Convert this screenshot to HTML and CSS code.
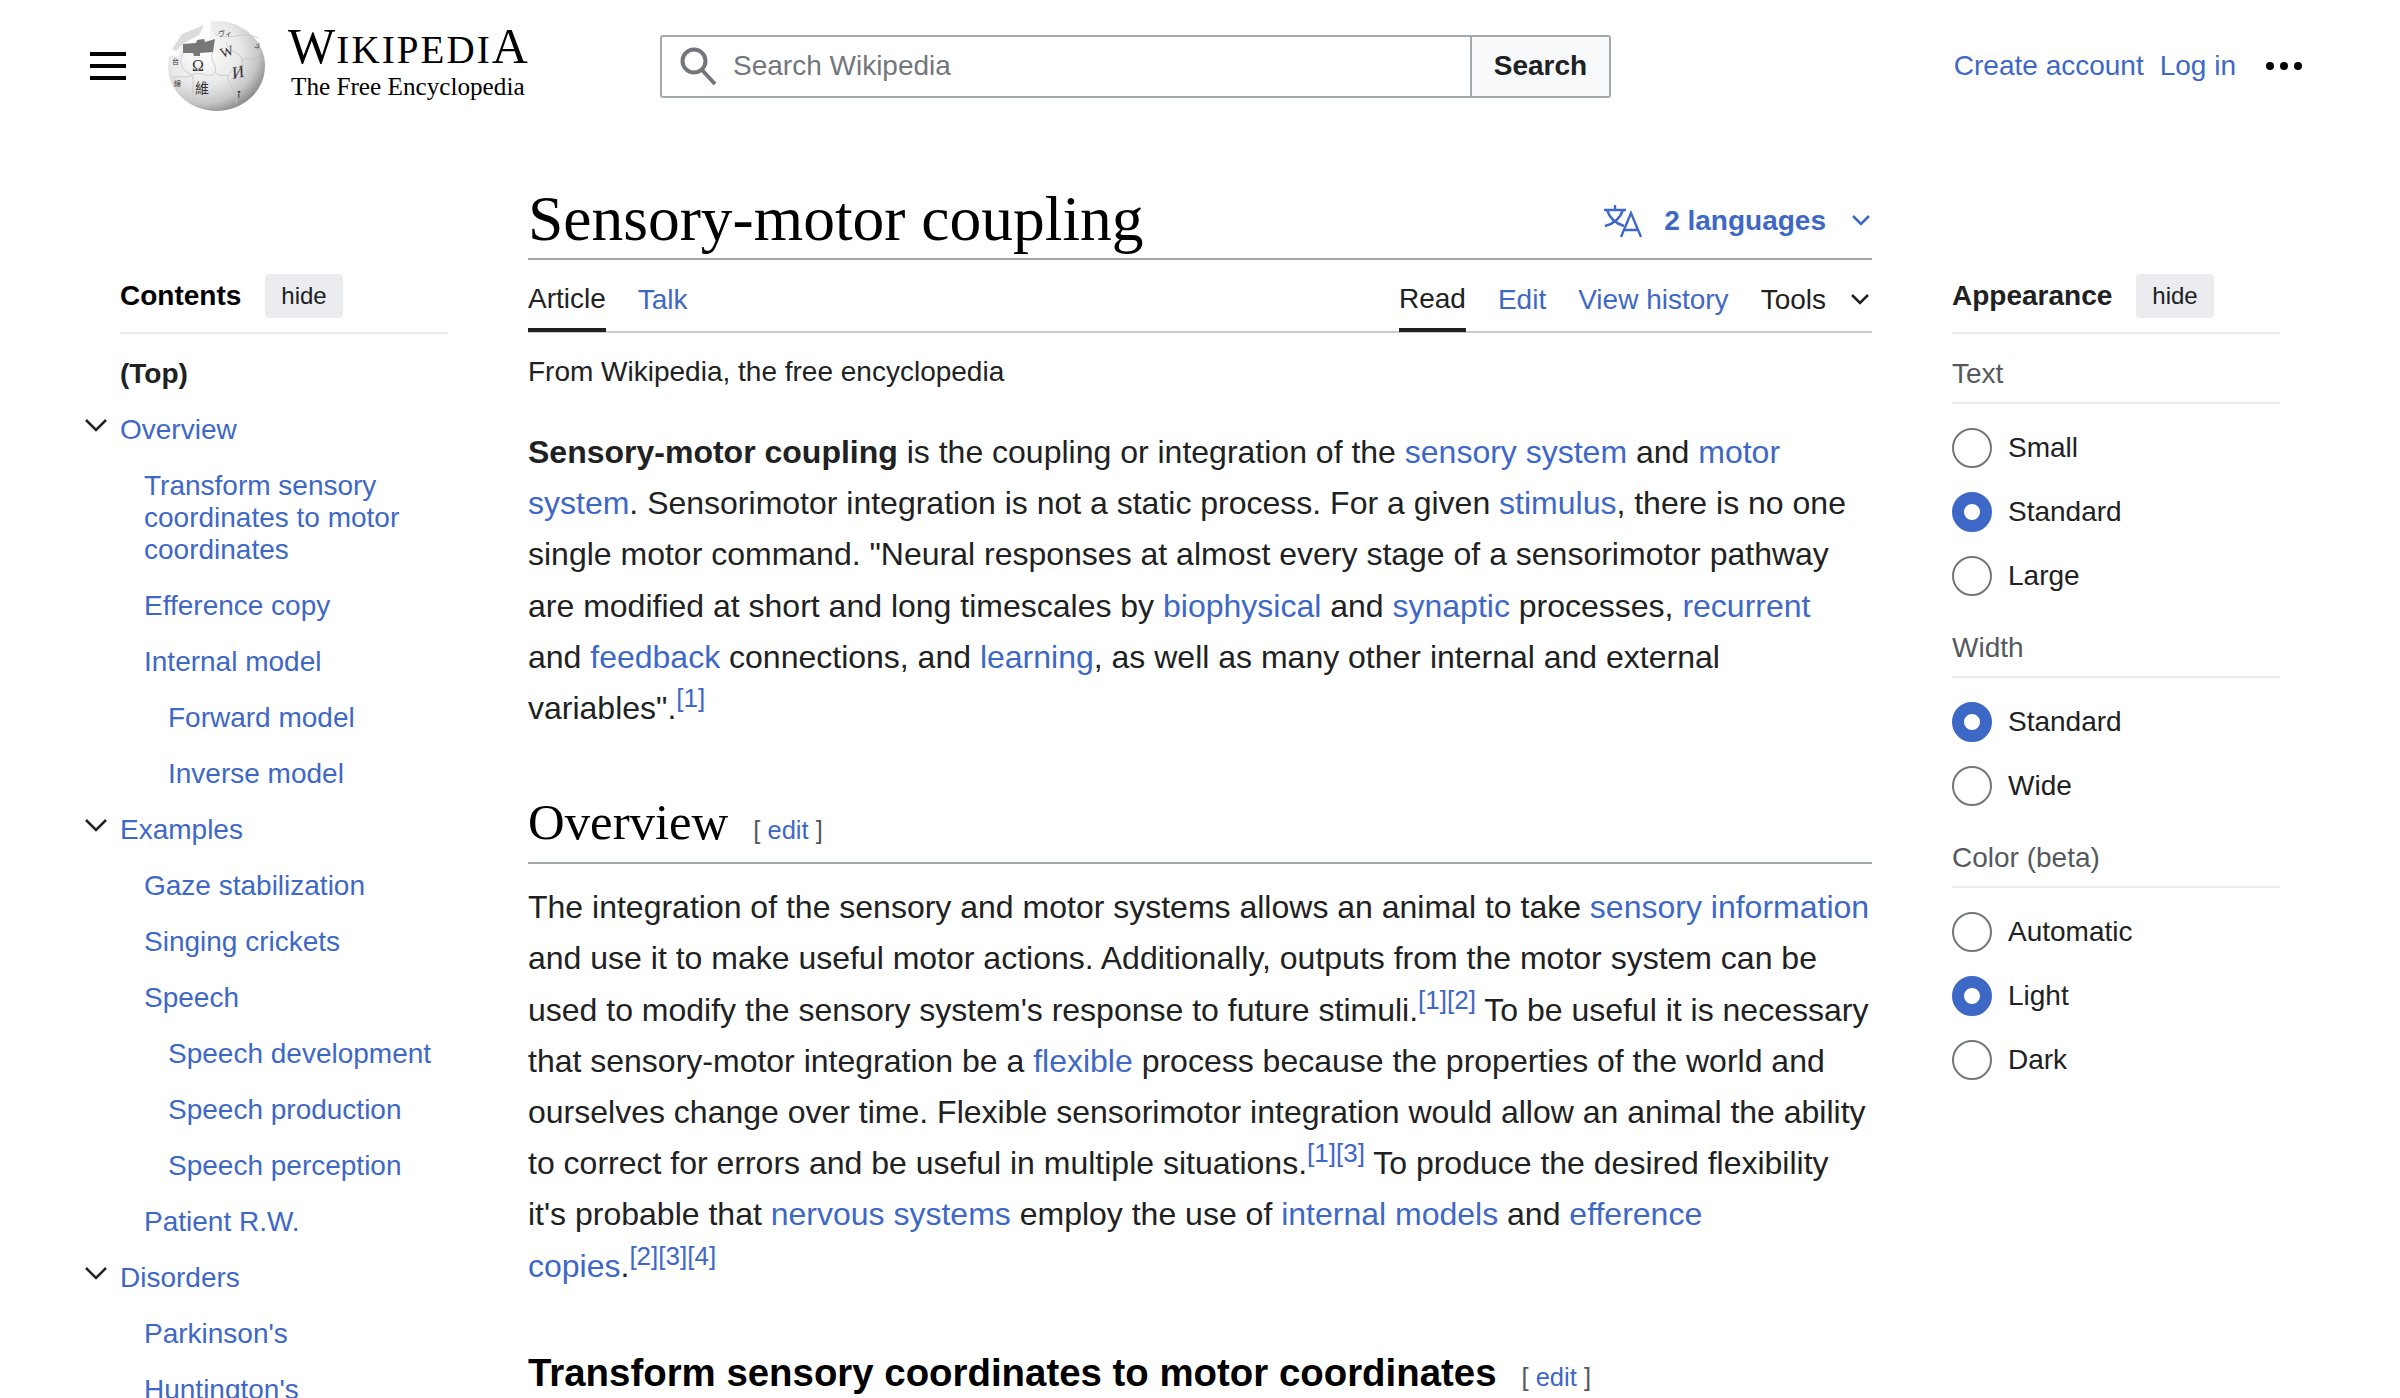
FILE: index.html
```html
<!DOCTYPE html>
<html>
    <head>
        <title>Sensory-motor coupling - Wikipedia</title>
        <link rel="stylesheet" href="styles.css">
    </head>
    <body>
        <header class="top">
            <div class="menu"><span></span><span></span><span></span></div>
            <div class="logo">
                <svg class="globe" width="100" height="92" viewBox="0 0 100 92">
                    <defs>
                        <radialGradient id="ball" cx="36%" cy="34%" r="70%">
                            <stop offset="0" stop-color="#fff"/>
                            <stop offset="0.55" stop-color="#e8e8e8"/>
                            <stop offset="0.82" stop-color="#c6c6c6"/>
                            <stop offset="1" stop-color="#8e8e8e"/>
                        </radialGradient>
                    </defs>
                    <ellipse cx="48.5" cy="46" rx="48.5" ry="45" fill="url(#ball)"/>
                    <path d="M0 0H43L42 19 15 23 10 36H0Z" fill="#fff"/>
                    <path d="M36 5 31 15 16 23 8 31 4 29 14 14Z" fill="#dcdcdc"/>
                    <path d="M15 24 28 23 29 20 36 19 37 22 47 19 45 32 32 33 32 36 26 36 25 33 15 33Z" fill="#777"/>
                    <g fill="none" stroke="#c4c4c4" stroke-width="0.8">
                        <path d="M45 32C40 40 50 44 47 52 44 60 32 50 24 55 16 60 12 54 4 58"/>
                        <path d="M58 22C60 34 72 30 74 40 76 50 62 48 60 56 58 64 70 68 68 84"/>
                        <path d="M47 52C52 58 56 54 60 56"/>
                        <path d="M24 55C28 66 20 72 30 86"/>
                        <path d="M47 14C60 22 74 10 90 18"/>
                        <path d="M74 40C80 36 88 44 97 38"/>
                        <path d="M15 33C10 44 14 50 24 55"/>
                    </g>
                    <text class="g1" x="24" y="51">Ω</text>
                    <text class="g2" x="54" y="38" transform="rotate(-18 54 38)">W</text>
                    <text class="g3" x="65" y="59" transform="rotate(-12 65 59)">И</text>
                    <text class="g4" x="27" y="73">維</text>
                    <text class="g5 bold" x="69" y="78">ז</text>
                    <text class="g6" x="50" y="16">ヴィ</text>
                    <text class="g6" x="4" y="44">台</text>
                    <text class="g6" x="86" y="28">ك</text>
                    <text class="g6" x="6" y="66">線</text>
                </svg>
                <div class="wordmark">
                    <div class="logo-name">W<span>IKIPEDI</span>A</div>
                    <div class="logo-tag">The Free Encyclopedia</div>
                </div>
            </div>
            <form class="search">
                <div class="search-box">
                    <svg width="38" height="38" viewBox="0 0 38 38"><circle cx="14" cy="14" r="11.5" fill="none" stroke="#72777d" stroke-width="4"/><path d="M22 23 35 37" stroke="#72777d" stroke-width="4" fill="none"/></svg>
                    <span>Search Wikipedia</span>
                </div>
                <div class="search-btn">Search</div>
            </form>
            <nav class="user">
                <a href="#">Create account</a>
                <a href="#">Log in</a>
                <div class="dots"><i></i><i></i><i></i></div>
            </nav>
        </header>

        <div class="page">
            <aside class="toc">
                <div class="side-head"><b>Contents</b><span class="hide">hide</span></div>
                <ul>
                    <li class="top-link">(Top)</li>
                    <li><svg class="toggle" viewBox="0 0 24 14"><path d="M2 2 12 12 22 2"/></svg><a href="#">Overview</a></li>
                    <li class="l2"><a href="#">Transform sensory coordinates to motor coordinates</a></li>
                    <li class="l2"><a href="#">Efference copy</a></li>
                    <li class="l2"><a href="#">Internal model</a></li>
                    <li class="l3"><a href="#">Forward model</a></li>
                    <li class="l3"><a href="#">Inverse model</a></li>
                    <li><svg class="toggle" viewBox="0 0 24 14"><path d="M2 2 12 12 22 2"/></svg><a href="#">Examples</a></li>
                    <li class="l2"><a href="#">Gaze stabilization</a></li>
                    <li class="l2"><a href="#">Singing crickets</a></li>
                    <li class="l2"><a href="#">Speech</a></li>
                    <li class="l3"><a href="#">Speech development</a></li>
                    <li class="l3"><a href="#">Speech production</a></li>
                    <li class="l3"><a href="#">Speech perception</a></li>
                    <li class="l2"><a href="#">Patient R.W.</a></li>
                    <li><svg class="toggle" viewBox="0 0 24 14"><path d="M2 2 12 12 22 2"/></svg><a href="#">Disorders</a></li>
                    <li class="l2"><a href="#">Parkinson's</a></li>
                    <li class="l2"><a href="#">Huntington's</a></li>
                </ul>
            </aside>

            <main class="article">
                <div class="title-row">
                    <h1>Sensory-motor coupling</h1>
                    <a class="langs" href="#">
                        <svg width="40" height="34" viewBox="0 0 40 34" fill="none" stroke="#3e68c6" stroke-width="2.4"><path d="M1 6H23M12 1V6M4 6C7 15 14 20 21 22M20 6C17 15 10 20 2 22"/><path d="M18 33 28 9 38 33M22 26H34"/></svg>
                        <b>2 languages</b>
                        <svg class="chev" viewBox="0 0 20 14"><path d="M2 2 10 10 18 2"/></svg>
                    </a>
                </div>
                <div class="tabs">
                    <div class="tab-group">
                        <span class="tab active">Article</span>
                        <a class="tab" href="#">Talk</a>
                    </div>
                    <div class="tab-group">
                        <span class="tab active">Read</span>
                        <a class="tab" href="#">Edit</a>
                        <a class="tab" href="#">View history</a>
                        <span class="tab">Tools</span>
                        <svg class="chev dark" viewBox="0 0 20 14"><path d="M2 2 10 10 18 2"/></svg>
                    </div>
                </div>
                <div class="tagline">From Wikipedia, the free encyclopedia</div>
                <p class="lead"><b>Sensory-motor coupling</b> is the coupling or integration of the <a href="#">sensory system</a> and <a href="#">motor system</a>. Sensorimotor integration is not a static process. For a given <a href="#">stimulus</a>, there is no one single motor command. "Neural responses at almost every stage of a sensorimotor pathway are modified at short and long timescales by <a href="#">biophysical</a> and <a href="#">synaptic</a> processes, <a href="#">recurrent</a> and <a href="#">feedback</a> connections, and <a href="#">learning</a>, as well as many other internal and external variables".<sup><a href="#">[1]</a></sup></p>
                <h2>Overview<span class="edit">[ <a href="#">edit</a> ]</span></h2>
                <p>The integration of the sensory and motor systems allows an animal to take <a href="#">sensory information</a> and use it to make useful motor actions. Additionally, outputs from the motor system can be used to modify the sensory system's response to future stimuli.<sup><a href="#">[1]</a><a href="#">[2]</a></sup> To be useful it is necessary that sensory-motor integration be a <a href="#">flexible</a> process because the properties of the world and ourselves change over time. Flexible sensorimotor integration would allow an animal the ability to correct for errors and be useful in multiple situations.<sup><a href="#">[1]</a><a href="#">[3]</a></sup> To produce the desired flexibility it's probable that <a href="#">nervous systems</a> employ the use of <a href="#">internal models</a> and <a href="#">efference</a> <span class="nowrap"><a href="#">copies</a>.<sup><a href="#">[2]</a><a href="#">[3]</a><a href="#">[4]</a></sup></span></p>
                <h3>Transform sensory coordinates to motor coordinates<span class="edit">[ <a href="#">edit</a> ]</span></h3>
            </main>

            <aside class="appearance">
                <div class="side-head"><b>Appearance</b><span class="hide">hide</span></div>
                <div class="group-label">Text</div>
                <div class="radio"><i></i>Small</div>
                <div class="radio on"><i></i>Standard</div>
                <div class="radio"><i></i>Large</div>
                <div class="group-label">Width</div>
                <div class="radio on"><i></i>Standard</div>
                <div class="radio"><i></i>Wide</div>
                <div class="group-label">Color (beta)</div>
                <div class="radio"><i></i>Automatic</div>
                <div class="radio on"><i></i>Light</div>
                <div class="radio"><i></i>Dark</div>
            </aside>
        </div>
    </body>
</html>
```

FILE: styles.css
```css
html, body {
    height: 100%;
    overflow: hidden;
}
body {
    margin: 0;
    background: #fff;
    color: #202122;
    font-family: "Liberation Sans", Arial, sans-serif;
    font-size: 28px;
}
a {
    color: #3e68c6;
    text-decoration: none;
}
.nowrap {
    white-space: nowrap;
}

/* header */
.top {
    display: flex;
    align-items: center;
    height: 132px;
    padding-left: 90px;
    padding-right: 98px;
}
.menu {
    display: flex;
    flex-direction: column;
    gap: 8px;
    width: 36px;
}
.menu span {
    display: block;
    height: 4px;
    background: #000;
}
.logo {
    display: flex;
    align-items: center;
    margin-left: 42px;
    width: 492px;
}
.globe {
    flex: none;
}
.globe text {
    font-family: "Liberation Serif", "Noto Sans CJK SC", serif;
    fill: #333;
}
.g1 { font-size: 16px; }
.g2 { font-size: 14px; }
.g3 { font-size: 17px; font-style: italic; }
.g4 { font-size: 14px; }
.g5 { font-size: 13px; }
.g6 { font-size: 7px; fill: #666; }
.bold { font-weight: bold; }
.wordmark {
    margin-left: 20px;
    margin-bottom: 6px;
    font-family: "Liberation Serif", serif;
    color: #000;
}
.logo-name {
    font-size: 50px;
    line-height: 44px;
    letter-spacing: 1.1px;
}
.logo-name span {
    font-size: 39px;
    letter-spacing: 2.1px;
}
.logo-tag {
    font-size: 25.2px;
    line-height: 30px;
    margin-left: 3px;
}
.search {
    display: flex;
    width: 951px;
    height: 63px;
    border: 2px solid #a2a9b1;
    border-radius: 3px;
    box-sizing: border-box;
}
.search-box {
    flex: 1;
    display: flex;
    align-items: center;
    gap: 15px;
    padding-left: 18px;
    color: #72777d;
}
.search-btn {
    width: 137px;
    display: flex;
    align-items: center;
    justify-content: center;
    background: #f8f9fa;
    border-left: 2px solid #a2a9b1;
    font-weight: bold;
}
.user {
    margin-left: auto;
    display: flex;
    align-items: center;
    gap: 16px;
}
.dots {
    display: flex;
    gap: 6px;
    margin-left: 14px;
}
.dots i {
    display: block;
    width: 8px;
    height: 8px;
    border-radius: 50%;
    background: #000;
}

/* three columns */
.page {
    display: grid;
    grid-template-columns: 328px 1344px 328px;
    column-gap: 80px;
    padding: 40px 120px 0;
}
.side-head {
    display: flex;
    align-items: center;
    gap: 24px;
    height: 44px;
    margin-top: 102px;
    padding-bottom: 14px;
    border-bottom: 2px solid #eaecf0;
}
.toc .side-head b {
    color: #000;
}
.hide {
    background: #eaecf0;
    border-radius: 4px;
    padding: 6px 16px;
    font-size: 24px;
    line-height: 32px;
}
.toc ul {
    list-style: none;
    margin: 12px 0 0;
    padding: 0;
}
.toc li {
    display: flex;
    padding: 12px 0;
    line-height: 32px;
}
.toc .top-link {
    font-weight: bold;
}
.toc .l2 {
    padding-left: 24px;
}
.toc .l3 {
    padding-left: 48px;
}
.toggle {
    width: 24px;
    height: 14px;
    margin: 4px 12px 0 -36px;
    flex: none;
    fill: none;
    stroke: #202122;
    stroke-width: 2.5;
}

/* article */
.title-row {
    display: flex;
    align-items: center;
    justify-content: space-between;
    height: 79px;
    padding-top: 7px;
    border-bottom: 2px solid #a2a9b1;
}
h1 {
    margin: 0;
    font-family: "Liberation Serif", serif;
    font-weight: normal;
    font-size: 63.5px;
    color: #000;
}
.langs {
    display: flex;
    align-items: center;
    gap: 21px;
    margin-top: 5px;
    margin-right: 1px;
}
.chev {
    width: 20px;
    height: 14px;
    margin-left: 4px;
    fill: none;
    stroke: #3e68c6;
    stroke-width: 2.5;
}
.chev.dark {
    stroke: #202122;
    margin-left: -8px;
    margin-right: 2px;
    margin-top: 8px;
}
.tabs {
    display: flex;
    justify-content: space-between;
    height: 71px;
    border-bottom: 2px solid #c8ccd1;
}
.tab-group {
    display: flex;
    align-items: center;
    gap: 32px;
}
.tab {
    height: 71px;
    box-sizing: border-box;
    padding-top: 24px;
}
.tab.active {
    border-bottom: 4px solid #202122;
    height: 73px;
}
.tagline {
    margin-top: 23px;
    line-height: 32px;
}
p {
    margin: 18px 0 0;
    font-size: 32px;
    line-height: 51.2px;
}
.lead {
    margin-top: 39px;
}
sup {
    font-size: 26px;
    line-height: 0;
}
h2 {
    margin: 53px 0 0;
    height: 75px;
    border-bottom: 2px solid #a2a9b1;
    font-family: "Liberation Serif", serif;
    font-weight: normal;
    font-size: 50.8px;
    line-height: 70px;
    color: #000;
}
h3 {
    margin: 56px 0 0;
    font-size: 38.4px;
    line-height: 50px;
    color: #000;
}
.edit {
    margin-left: 25px;
    font-family: "Liberation Sans", Arial, sans-serif;
    font-weight: normal;
    font-size: 25.5px;
    color: #54595d;
}

/* appearance */
.group-label {
    height: 44px;
    margin-top: 24px;
    line-height: 32px;
    color: #54595d;
    border-bottom: 2px solid #eaecf0;
}
.radio {
    display: flex;
    align-items: center;
    gap: 16px;
    height: 64px;
}
.group-label + .radio {
    margin-top: 12px;
}
.radio i {
    box-sizing: border-box;
    width: 40px;
    height: 40px;
    border: 2px solid #72777d;
    border-radius: 50%;
}
.radio.on i {
    border: 12px solid #3e68c6;
}
```
